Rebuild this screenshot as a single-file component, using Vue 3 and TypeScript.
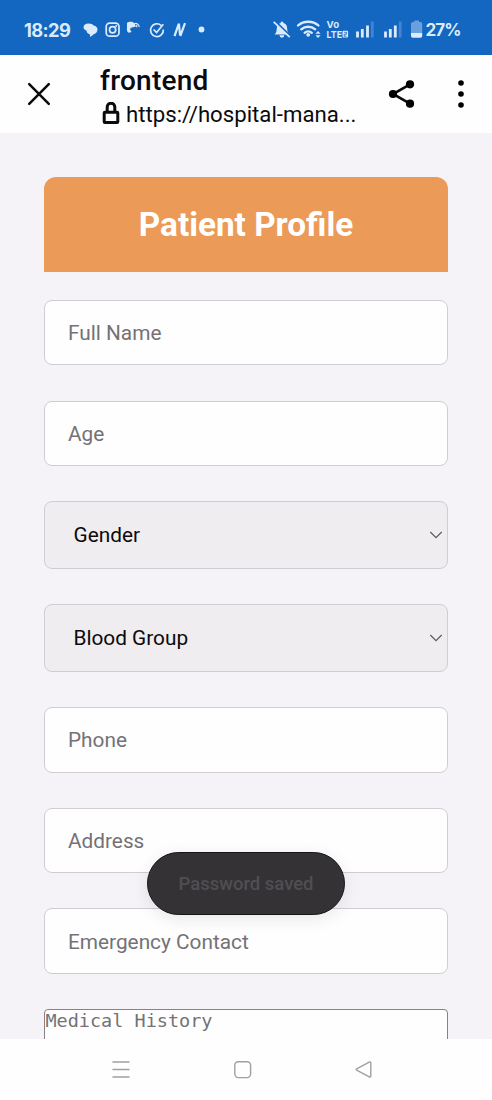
<script setup lang="ts">
interface Field {
  id: string
  label: string
  kind: 'input' | 'select' | 'textarea'
}

const fields: Field[] = [
  { id: 'name', label: 'Full Name', kind: 'input' },
  { id: 'age', label: 'Age', kind: 'input' },
  { id: 'gender', label: 'Gender', kind: 'select' },
  { id: 'blood', label: 'Blood Group', kind: 'select' },
  { id: 'phone', label: 'Phone', kind: 'input' },
  { id: 'address', label: 'Address', kind: 'input' },
  { id: 'emergency', label: 'Emergency Contact', kind: 'input' },
  { id: 'history', label: 'Medical History', kind: 'textarea' },
]
</script>

<template>
  <div class="screen">
    <header class="status">
      <span class="clock">18:29</span>
      <svg class="status-left" width="126" height="22" viewBox="82 19 126 22">
        <path class="fill" d="M88.500 23.500c2.500 0 4.300.8 5.300 2 2.200.6 3.700 2 3.700 4 0 2.200-1.400 4-3.700 4.700L90.200 37l-.4-2.700c-2-.6-3.200-2-3.300-3.900-1.800-.6-3-1.700-3-3.200 0-2.200 2.200-3.700 5-3.700z" />
        <rect class="line" x="106.200" y="23.200" width="12.800" height="13" rx="3.500" />
        <circle class="line" cx="112.600" cy="29.700" r="3.100" />
        <circle class="fill" cx="116.200" cy="26" r="1" />
        <path class="fill" d="M127 22.800c2-1.500 6-1.600 7.500.6l1.500 3-5.200 1.400-.8 2 1.700 2.200-2.900.8c-2-.8-2-3-1.800-5z" />
        <path class="line thin" d="M133.500 24.500c2.500-2 5.500-1 5.700 2.500M136.700 27.300v-2.500" />
        <path class="line" d="M161.300 25.500a6.400 6.400 0 1 0 2 4M153.600 29.500l3 3 6.700-8.200" />
        <path class="line heavy" d="M174.500 36.200 178.700 24M178.900 23.500l1.200 12M180.300 36l4.700-12.800" />
        <circle class="fill" cx="201.500" cy="29.500" r="2.900" />
      </svg>
      <svg class="status-right" width="152" height="24" viewBox="271 18 152 24">
        <path class="fill" d="M274.500 34.600c2.600-2 2-5.500 2.600-8 .7-2.100 2.200-3.200 3.500-3.500.4-2 2.500-2 2.900 0 3 .8 3.700 3.500 3.700 6 0 2.400.8 3.800 2.200 5.500z" />
        <path class="fill" d="M279.500 35.300h4.800a2.400 2.400 0 0 1-4.800 0z" />
        <path class="slash" d="m275.500 22 15 14.500" />
        <path class="line" d="m273.700 21.800 16 15.400" />
        <path class="wifi" d="M298 25.500c5.800-5 14.700-5 20.500 0M301.200 29.300c4-3.400 10-3.400 14 0M304.600 32.800c2-1.700 5.200-1.700 7.200 0" />
        <circle class="fill" cx="308.200" cy="34.800" r="1.900" />
        <path class="fill" d="m318 31 2.600 2.800h-5.200zM318 37.900l-2.600-2.700h5.200z" />
        <text class="badge" x="326.600" y="28.300" textLength="12.500" lengthAdjust="spacingAndGlyphs">Vo</text>
        <text class="badge" x="326.600" y="37.500" textLength="15.500" lengthAdjust="spacingAndGlyphs">LTE</text>
        <rect class="fill" x="342.500" y="30.800" width="5.600" height="6.700" rx="1" />
        <path class="digit" d="M344.200 32.300h2.300v1.900h-2.300v2h2.300" />
        <path class="bars" d="M357.500 37.500v-6M362.300 37.500v-8.500M367.500 37.500V25.500M385.500 37.500v-6M390.300 37.500v-8.500M395.300 37.500V25.500" />
        <path class="bars dim" d="M372.300 37.500V21.500M400.200 37.500V21.500" />
        <path class="dim-fill" d="M412.800 22h1.500v-1.500h4.700V22h1.500q1.700 0 1.700 1.700V33H411v-9.300q0-1.700 1.800-1.700z" />
        <path class="fill" d="M411 33h11.200v3q0 1.700-1.700 1.700h-7.700q-1.800 0-1.800-1.700z" />
      </svg>
      <span class="percent">27%</span>
    </header>

    <div class="toolbar">
      <svg class="close" width="26" height="26" viewBox="0 0 26 26"><path d="m3.200 3.200 19.600 19.600M22.800 3.200 3.200 22.800" /></svg>
      <div class="site">
        <div class="site-title">frontend</div>
        <div class="site-url">
          <svg width="18" height="24" viewBox="0 0 18 24">
            <path class="shackle" d="M5.200 9.500V5a3.800 3.800 0 0 1 7.600 0v4.500" />
            <rect class="lock-body" x="2.200" y="10.300" width="13.600" height="10.200" rx=".7" />
          </svg>
          <span>https://hospital-mana...</span>
        </div>
      </div>
      <svg class="share" width="28" height="30" viewBox="0 0 28 30">
        <path d="M22 5.300 5 15l17 9.700" />
        <circle cx="22" cy="5.300" r="4.100" /><circle cx="5" cy="15" r="4.100" /><circle cx="22" cy="24.700" r="4.100" />
      </svg>
      <svg class="more" width="8" height="30" viewBox="0 0 8 30">
        <circle cx="4" cy="4" r="2.800" /><circle cx="4" cy="15" r="2.800" /><circle cx="4" cy="26" r="2.800" />
      </svg>
    </div>

    <main class="page">
      <h1>Patient Profile</h1>
      <div class="form">
        <div v-for="field in fields" :key="field.id" class="field" :class="field.kind">
          <span>{{ field.label }}</span>
          <svg v-if="field.kind === 'select'" width="14" height="10" viewBox="0 0 14 10"><path d="m1.300 2 5.700 5.700L12.700 2" /></svg>
        </div>
      </div>
    </main>

    <nav class="nav">
      <svg width="20" height="20" viewBox="0 0 20 20"><path d="M1.500 2h17M1.500 9.500h17M1.500 17h17" /></svg>
      <svg width="20" height="20" viewBox="0 0 20 20"><rect x="1.800" y="1.800" width="15.800" height="15.800" rx="3.500" /></svg>
      <svg width="20" height="20" viewBox="0 0 20 20"><path d="M15.200 2.200 2.700 8.900q-1 .6 0 1.200l12.500 6.700q1.600.7 1.600-.9V3.100q0-1.600-1.600-.9z" /></svg>
    </nav>

    <div class="toast">Password saved</div>
  </div>
</template>

<style>
body {
  margin: 0;
}
</style>

<style scoped>
.screen {
  position: relative;
  display: flex;
  flex-direction: column;
  width: 492px;
  height: 1100px;
  overflow: hidden;
  background: #fefefe;
  font-family: Roboto, "Noto Sans", sans-serif;
  color: #0b0a0d;
}
.screen svg {
  flex: none;
  display: block;
}
.status {
  display: flex;
  align-items: center;
  flex: none;
  box-sizing: border-box;
  height: 55px;
  padding: 5px 0 0 24px;
  background: #1367c1;
  color: #dcebfc;
}
.clock {
  width: 58px;
  font: 700 18.3px/22px Inter, sans-serif;
  letter-spacing: -0.6px;
}
.status-right {
  margin-left: 63px;
}
.percent {
  margin-left: 2.500px;
  font: 700 17px/22px Inter, sans-serif;
  letter-spacing: -0.9px;
}
.fill {
  fill: #dcebfc;
}
.line {
  fill: none;
  stroke: #dcebfc;
  stroke-width: 1.700;
}
.thin {
  stroke-width: 1.200;
}
.heavy {
  stroke-width: 2.200;
}
.slash {
  stroke: #1367c1;
  stroke-width: 2.500;
}
.wifi {
  fill: none;
  stroke: #dcebfc;
  stroke-width: 2.300;
  stroke-linecap: round;
}
.badge {
  font: 700 9.500px Inter, sans-serif;
  fill: #dcebfc;
}
.digit {
  fill: none;
  stroke: #1367c1;
  stroke-width: 0.8;
}
.bars {
  stroke: #dcebfc;
  stroke-width: 2.800;
}
.bars.dim {
  stroke: #3f85d3;
}
.dim-fill {
  fill: #6aa0df;
}
.toolbar {
  display: flex;
  align-items: center;
  flex: none;
  height: 78px;
  padding-left: 26px;
}
.close path {
  stroke: #0b0a0d;
  stroke-width: 2.500;
  stroke-linecap: round;
}
.site {
  width: 288px;
  margin-left: 48px;
  padding-top: 6px;
}
.site-title {
  font-size: 28px;
  font-weight: 500;
  line-height: 34px;
  letter-spacing: 0.25px;
}
.site-url {
  display: flex;
  align-items: center;
  gap: 6px;
  height: 32px;
  padding-left: 2px;
  font-size: 22.200px;
  white-space: nowrap;
}
.shackle,
.lock-body {
  fill: none;
  stroke: #0b0a0d;
  stroke-width: 3;
}
.share path {
  fill: none;
  stroke: #0b0a0d;
  stroke-width: 2.600;
}
.more {
  margin-left: 41px;
}
.page {
  flex: none;
  box-sizing: border-box;
  height: 906px;
  padding: 44.400px 44.400px 0 44.400px;
  overflow: hidden;
  background: #f5f3f7;
}
h1 {
  height: 94.600px;
  margin: 0;
  border-radius: 12px 12px 0 0;
  background: #eb9b57;
  color: #fff;
  font-size: 33.300px;
  font-weight: 700;
  line-height: 96px;
  text-align: center;
}
.form {
  display: flex;
  flex-direction: column;
  gap: 35.200px;
  padding-top: 28px;
}
.field {
  display: flex;
  align-items: center;
  justify-content: space-between;
  flex: none;
  box-sizing: border-box;
  height: 65.500px;
  padding: 0.600px 4px 0 22.600px;
  border: 1.500px solid #cfcdd2;
  border-radius: 8px;
  background: #fefefe;
  color: #747276;
  font-size: 20.800px;
}
.field.select {
  height: 67.700px;
  padding-top: 0;
  padding-left: 28.100px;
  background: #efedf0;
  color: #0b0a0d;
}
.field.select path {
  fill: none;
  stroke: #5c5a5f;
  stroke-width: 1.200;
}
.field.textarea {
  align-items: flex-start;
  height: 110px;
  padding: 0;
  border-color: #858388;
  border-radius: 4px;
  font: 18.500px/22px "DejaVu Sans Mono", monospace;
}
.nav {
  display: flex;
  flex: 1;
  align-items: center;
  justify-content: space-between;
  padding: 0 118px 0 111px;
}
.nav path,
.nav rect {
  fill: none;
  stroke: #a09fa1;
  stroke-width: 1.400;
}
.toast {
  position: absolute;
  top: 852px;
  left: 147px;
  box-sizing: border-box;
  width: 198px;
  height: 63px;
  border: 1px solid #151417;
  border-radius: 32px;
  background: #343235;
  box-shadow: 0 4px 16px rgba(40, 35, 50, 0.1);
  color: #504e52;
  font-size: 18.500px;
  font-weight: 500;
  line-height: 63px;
  text-align: center;
}
</style>
